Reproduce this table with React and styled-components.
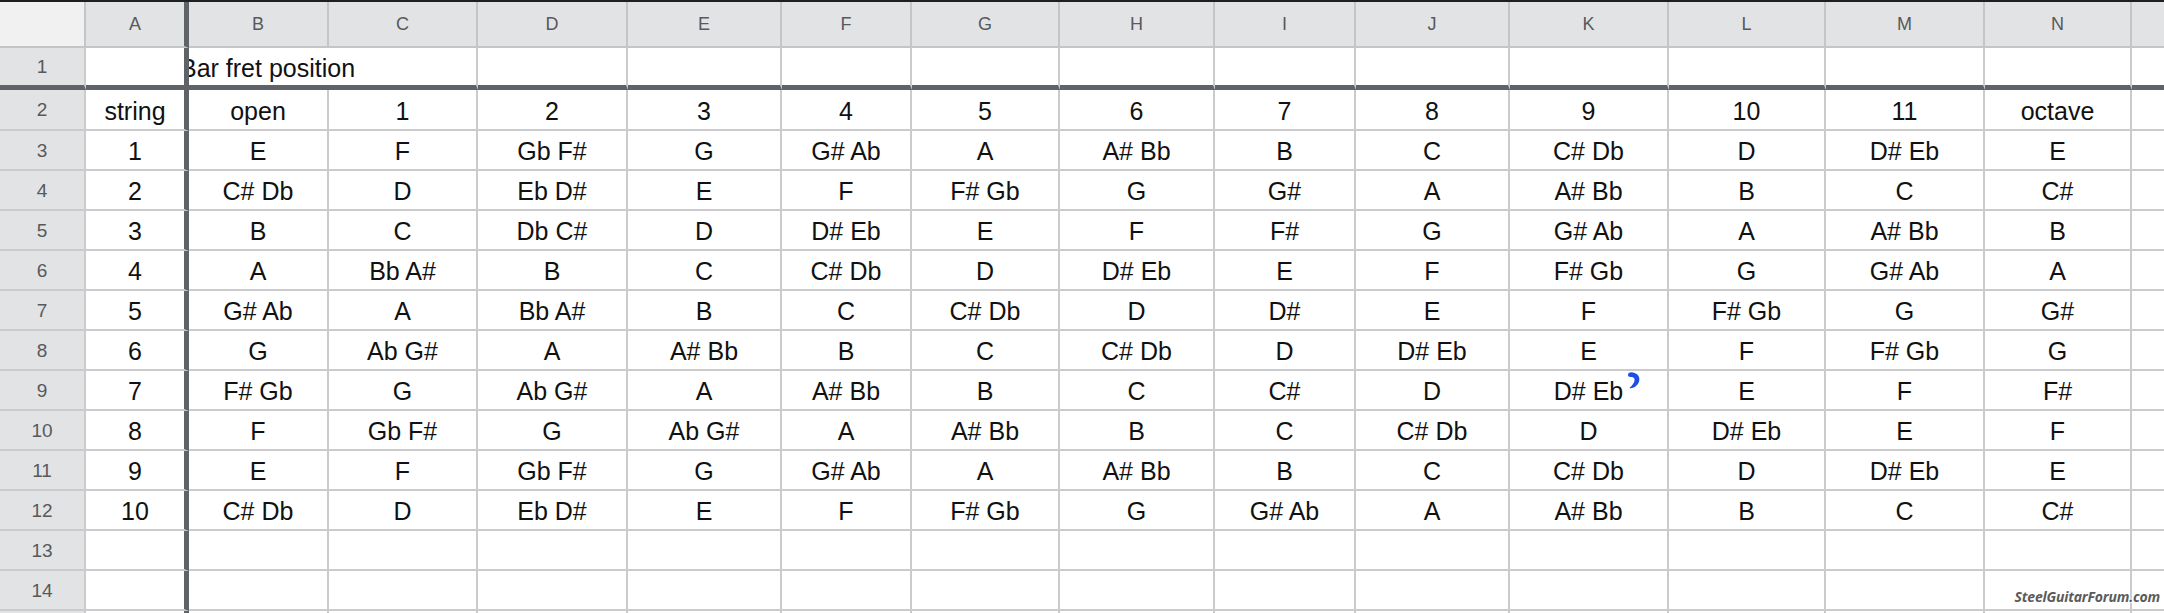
import React from "react";
import styled, { createGlobalStyle } from "styled-components";

const GlobalStyle = createGlobalStyle`
  html, body {
    margin: 0;
    padding: 0;
    background: #ffffff;
    overflow: hidden;
  }
`;

const COLS = [86, 103, 140, 149, 150, 154, 130, 148, 155, 141, 154, 159, 157, 159, 147, 120];
const LETTERS = ["", "A", "B", "C", "D", "E", "F", "G", "H", "I", "J", "K", "L", "M", "N", ""];

const DATA = [
  ["string", "open", "1", "2", "3", "4", "5", "6", "7", "8", "9", "10", "11", "octave"],
  ["1", "E", "F", "Gb F#", "G", "G# Ab", "A", "A# Bb", "B", "C", "C# Db", "D", "D# Eb", "E"],
  ["2", "C# Db", "D", "Eb D#", "E", "F", "F# Gb", "G", "G#", "A", "A# Bb", "B", "C", "C#"],
  ["3", "B", "C", "Db C#", "D", "D# Eb", "E", "F", "F#", "G", "G# Ab", "A", "A# Bb", "B"],
  ["4", "A", "Bb A#", "B", "C", "C# Db", "D", "D# Eb", "E", "F", "F# Gb", "G", "G# Ab", "A"],
  ["5", "G# Ab", "A", "Bb A#", "B", "C", "C# Db", "D", "D#", "E", "F", "F# Gb", "G", "G#"],
  ["6", "G", "Ab G#", "A", "A# Bb", "B", "C", "C# Db", "D", "D# Eb", "E", "F", "F# Gb", "G"],
  ["7", "F# Gb", "G", "Ab G#", "A", "A# Bb", "B", "C", "C#", "D", "D# Eb", "E", "F", "F#"],
  ["8", "F", "Gb F#", "G", "Ab G#", "A", "A# Bb", "B", "C", "C# Db", "D", "D# Eb", "E", "F"],
  ["9", "E", "F", "Gb F#", "G", "G# Ab", "A", "A# Bb", "B", "C", "C# Db", "D", "D# Eb", "E"],
  ["10", "C# Db", "D", "Eb D#", "E", "F", "F# Gb", "G", "G# Ab", "A", "A# Bb", "B", "C", "C#"],
  [], [], [],
];

const GRID = "#cbcbcd";
const THICK = "#5f6266";
const HEAD_BG = "#e2e3e5";

const Page = styled.div`
  position: relative;
  width: 2164px;
  height: 613px;
  overflow: hidden;
  background: #fff;
`;

const TopBand = styled.div`
  height: 2px;
  background: #1e1f22;
`;

const Sheet = styled.div`
  display: grid;
  grid-template-columns: ${COLS.map((c) => c + "px").join(" ")};
  grid-template-rows: 46px 42px 41px repeat(13, 40px);
  font-family: "Liberation Sans", Arial, sans-serif;
`;

const Base = styled.div`
  box-sizing: border-box;
  display: flex;
  align-items: center;
  justify-content: center;
  white-space: nowrap;
  border-right: ${(p) => (p.$thickRight ? `5px solid ${THICK}` : `2px solid ${p.$lineColor || GRID}`)};
  border-bottom: ${(p) => (p.$thickBottom ? `5px solid ${THICK}` : `2px solid ${p.$lineColor || GRID}`)};
  position: ${(p) => (p.$front ? "relative" : "static")};
  z-index: ${(p) => (p.$front ? 1 : "auto")};
`;

const Corner = styled(Base)`
  background: #f1f1f2;
`;

const ColHead = styled(Base)`
  background: ${HEAD_BG};
  color: #58595c;
  font-size: 18px;
`;

const RowHead = styled(Base)`
  background: ${HEAD_BG};
  color: #58595c;
  font-size: 19px;
  padding-top: 1px;
`;

const Cell = styled(Base)`
  background: #fff;
  color: #111;
  font-size: 25px;
  padding-top: 3px;
  justify-content: ${(p) => (p.$left ? "flex-start" : "center")};
  grid-column: ${(p) => (p.$span ? `span ${p.$span}` : "auto")};
`;

const Title = styled.span`
  margin-left: -9px;
`;

const Scribble = styled.svg`
  position: absolute;
  left: 117px;
  top: 0;
`;

const Watermark = styled.div`
  position: absolute;
  right: 4px;
  bottom: 7px;
  font-family: "Open Sans", "DejaVu Sans", sans-serif;
  font-style: italic;
  font-weight: 700;
  font-size: 14px;
  letter-spacing: -0.2px;
  color: #5b5b5b;
  text-shadow: 0 0 2px #fff, 0 0 2px #fff, 1px 1px 0 #fff, -1px -1px 0 #fff;
`;

const BlueMark = () => (
  <Scribble width="14" height="18" viewBox="0 0 14 18">
    <path
      d="M1 3.5 C1.5 0.2, 6.5 0.6, 10 3.2 C13.6 6, 13 11.8, 9 15 C7.2 16.6, 4.6 17.6, 2.4 17 C5.4 14.4, 7.8 11.6, 7.6 8.6 C7.4 6.6, 6 5.8, 4.2 6 C2.2 6.2, 0.7 5.3, 1 3.5 Z"
      fill="#1d4fe6"
    />
  </Scribble>
);

export default function App() {
  const rows = [];
  for (let r = 1; r <= 15; r++) {
    const thickBottom = r === 1;
    rows.push(
      <RowHead key={`rh${r}`} $thickBottom={thickBottom}>
        {r <= 14 ? r : ""}
      </RowHead>
    );
    if (r === 1) {
      rows.push(<Cell key="a1" $thickRight $thickBottom $front />);
      rows.push(
        <Cell key="b1" $thickBottom $left $span={2}>
          <Title>Bar fret position</Title>
        </Cell>
      );
      for (let c = 4; c < COLS.length; c++) {
        rows.push(<Cell key={`r1c${c}`} $thickBottom />);
      }
    } else {
      const data = DATA[r - 2] || [];
      for (let c = 1; c < COLS.length; c++) {
        const val = data[c - 1] || "";
        const isK9 = r === 9 && c === 11;
        rows.push(
          <Cell key={`r${r}c${c}`} $thickRight={c === 1} $front={c === 1 || isK9}>
            {val}
            {isK9 && <BlueMark />}
          </Cell>
        );
      }
    }
  }

  return (
    <Page>
      <GlobalStyle />
      <TopBand />
      <Sheet>
        <Corner $lineColor="#c4c5c7" />
        {LETTERS.slice(1).map((l, i) => (
          <ColHead key={`h${i}`} $thickRight={l === "A"} $lineColor="#c4c5c7">
            {l}
          </ColHead>
        ))}
        {rows}
      </Sheet>
      <Watermark>SteelGuitarForum.com</Watermark>
    </Page>
  );
}
